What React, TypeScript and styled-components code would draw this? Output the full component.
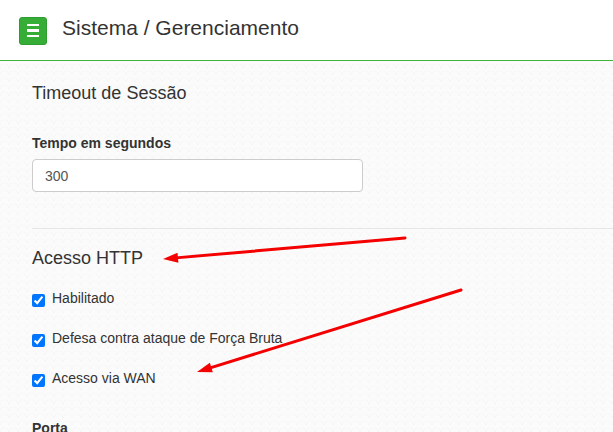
import React from "react";
import styled, { createGlobalStyle } from "styled-components";

const GlobalStyle = createGlobalStyle`
  html, body { margin: 0; padding: 0; }
  body {
    font-family: "Liberation Sans", Arial, sans-serif;
    color: #333;
    background: #fff;
    overflow: hidden;
  }
`;

const Page = styled.div`
  position: relative;
  width: 613px;
  height: 432px;
  overflow: hidden;
`;

const Header = styled.header`
  height: 60px;
  background: #fff;
  border-bottom: 1px solid #3eb33e;
  display: flex;
  align-items: center;
  padding-left: 19px;
  gap: 15px;
  box-sizing: content-box;
`;

const MenuButton = styled.button`
  width: 28px;
  height: 28px;
  border: 1px solid #2e9c2e;
  border-radius: 3px;
  background: #36ad36;
  padding: 0;
  display: flex;
  flex-direction: column;
  align-items: center;
  justify-content: center;
  gap: 3px;
  box-sizing: border-box;
  margin-top: 1px;
`;

const Bar = styled.span`
  display: block;
  width: 12px;
  height: 2.5px;
  background: #fff;
`;

const PageTitle = styled.h1`
  margin: 0;
  font-size: 21px;
  font-weight: 400;
  line-height: 24px;
  color: #333;
  margin-top: -4px;
`;

const Content = styled.main`
  height: 371px;
  padding: 22px 0 0 32px;
  box-sizing: border-box;
  background-color: #fbfbfb;
  background-image: radial-gradient(circle at 50% 100%, transparent 3.5px, rgba(0, 0, 0, 0.018) 4px, transparent 5px);
  background-size: 9px 7px;
`;

const SectionTitle = styled.h3<{ $mt?: number }>`
  margin: ${(p) => p.$mt ?? 0}px 0 0;
  font-size: 18px;
  font-weight: 400;
  line-height: 20px;
  color: #333;
`;

const FieldLabel = styled.label<{ $mt: number }>`
  display: block;
  margin-top: ${(p) => p.$mt}px;
  font-size: 14px;
  font-weight: 700;
  line-height: 20px;
  color: #333;
`;

const TextInput = styled.input`
  display: block;
  margin-top: 6px;
  width: 331px;
  height: 33px;
  box-sizing: border-box;
  padding: 6px 12px;
  border: 1px solid #ccc;
  border-radius: 4px;
  background: #fff;
  font-family: "Liberation Sans", Arial, sans-serif;
  font-size: 14px;
  line-height: 20px;
  color: #555;
  outline: none;
`;

const Divider = styled.hr`
  margin: 36px 0 0;
  border: 0;
  border-top: 1px solid #e6e6e6;
  height: 0;
`;

const CheckList = styled.div`
  display: flex;
  flex-direction: column;
  gap: 20px;
  margin-top: 20px;
`;

const CheckRow = styled.label`
  display: flex;
  align-items: flex-start;
  font-size: 14px;
  line-height: 20px;
  color: #333;
`;

const CheckBox = styled.input`
  width: 13px;
  height: 13px;
  margin: 6px 7px 0 0;
  accent-color: #0075ff;
`;

const Arrows = styled.svg`
  position: absolute;
  left: 0;
  top: 0;
  pointer-events: none;
`;

function Arrow({ x1, y1, x2, y2 }: { x1: number; y1: number; x2: number; y2: number }) {
  const dx = x2 - x1;
  const dy = y2 - y1;
  const len = Math.hypot(dx, dy);
  const ux = dx / len;
  const uy = dy / len;
  const head = 15;
  const half = 5;
  const bx = x2 - ux * head;
  const by = y2 - uy * head;
  const px = -uy * half;
  const py = ux * half;
  return (
    <g>
      <line x1={x1} y1={y1} x2={bx + ux * 2} y2={by + uy * 2} stroke="#f40000" strokeWidth={3} strokeLinecap="round" />
      <polygon points={`${x2},${y2} ${bx + px},${by + py} ${bx - px},${by - py}`} fill="#f40000" />
    </g>
  );
}

export default function App() {
  return (
    <Page>
      <GlobalStyle />
      <Header>
        <MenuButton aria-label="menu">
          <Bar />
          <Bar />
          <Bar />
        </MenuButton>
        <PageTitle>Sistema / Gerenciamento</PageTitle>
      </Header>
      <Content>
        <SectionTitle>Timeout de Sessão</SectionTitle>
        <FieldLabel $mt={30}>Tempo em segundos</FieldLabel>
        <TextInput defaultValue="300" />
        <Divider />
        <SectionTitle $mt={19}>Acesso HTTP</SectionTitle>
        <CheckList>
          <CheckRow>
            <CheckBox type="checkbox" defaultChecked />
            Habilitado
          </CheckRow>
          <CheckRow>
            <CheckBox type="checkbox" defaultChecked />
            Defesa contra ataque de Força Bruta
          </CheckRow>
          <CheckRow>
            <CheckBox type="checkbox" defaultChecked />
            Acesso via WAN
          </CheckRow>
        </CheckList>
        <FieldLabel $mt={30}>Porta</FieldLabel>
      </Content>
      <Arrows width={613} height={432} viewBox="0 0 613 432">
        <Arrow x1={405} y1={238} x2={163} y2={259} />
        <Arrow x1={461} y1={290} x2={197} y2={372} />
      </Arrows>
    </Page>
  );
}
